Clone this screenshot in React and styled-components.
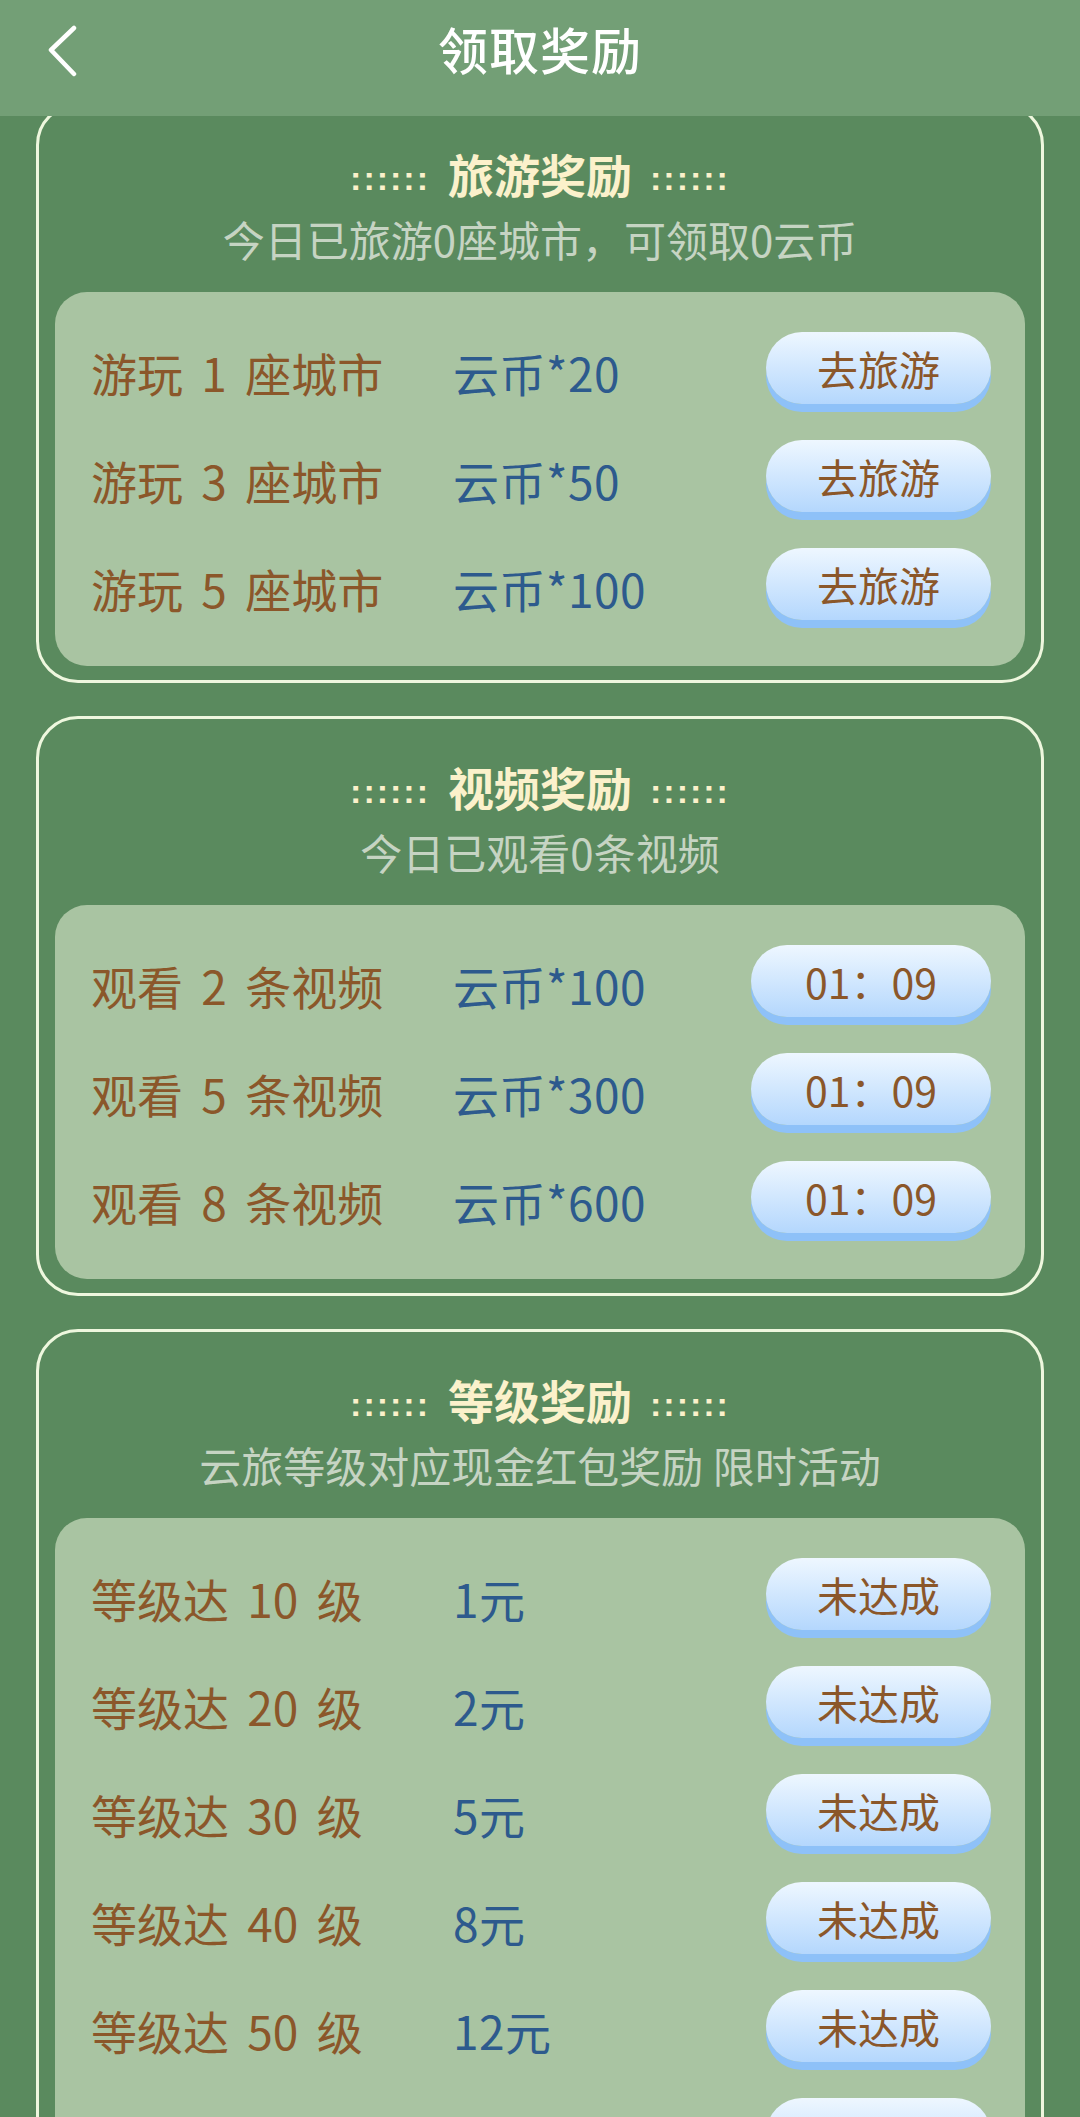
import React from 'react'
import styled, { createGlobalStyle } from 'styled-components'

const GlobalStyle = createGlobalStyle`
    html, body {
        margin: 0;
        padding: 0;
        background: #5a8a5e;
        font-family: "Noto Sans CJK SC", "Noto Sans", sans-serif;
    }
`

const travelRows = [
    { label: '游玩 1 座城市', reward: '云币*20', action: '去旅游' },
    { label: '游玩 3 座城市', reward: '云币*50', action: '去旅游' },
    { label: '游玩 5 座城市', reward: '云币*100', action: '去旅游' },
]

const videoRows = [
    { label: '观看 2 条视频', reward: '云币*100', action: '01：09' },
    { label: '观看 5 条视频', reward: '云币*300', action: '01：09' },
    { label: '观看 8 条视频', reward: '云币*600', action: '01：09' },
]

const levelRows = [
    { label: '等级达 10 级', reward: '1元', action: '未达成' },
    { label: '等级达 20 级', reward: '2元', action: '未达成' },
    { label: '等级达 30 级', reward: '5元', action: '未达成' },
    { label: '等级达 40 级', reward: '8元', action: '未达成' },
    { label: '等级达 50 级', reward: '12元', action: '未达成' },
    { label: '等级达 60 级', reward: '20元', action: '未达成' },
]

function RewardCard({ title, desc, rows, wide }) {
    return (
        <Card>
            <CardTitle>
                <Dots>::::::</Dots>
                <span>{title}</span>
                <Dots>::::::</Dots>
            </CardTitle>
            <CardDesc>{desc}</CardDesc>
            <Panel>
                {rows.map((r, i) => (
                    <Row key={i}>
                        <Label>{r.label}</Label>
                        <Reward>{r.reward}</Reward>
                        <ActionButton wide={wide}>{r.action}</ActionButton>
                    </Row>
                ))}
            </Panel>
        </Card>
    )
}

function App() {
    return (
        <>
            <GlobalStyle />
            <Header>
                <BackButton>
                    <svg width="34" height="52" viewBox="0 0 34 52" fill="none">
                        <path d="M28 3 L5 25 L28 49" stroke="#fff" strokeWidth="4.5" strokeLinecap="round" strokeLinejoin="round" />
                    </svg>
                </BackButton>
                <HeaderTitle>领取奖励</HeaderTitle>
            </Header>
            <Main>
                <RewardCard title="旅游奖励" desc="今日已旅游0座城市，可领取0云币" rows={travelRows} />
                <RewardCard title="视频奖励" desc="今日已观看0条视频" rows={videoRows} wide />
                <RewardCard title="等级奖励" desc="云旅等级对应现金红包奖励 限时活动" rows={levelRows} />
            </Main>
        </>
    )
}

export default App

const Header = styled.div`
    position: fixed;
    top: 0;
    left: 0;
    right: 0;
    height: 116px;
    background: #739f76;
    display: flex;
    align-items: center;
    justify-content: center;
    z-index: 10;
`

const BackButton = styled.div`
    position: absolute;
    left: 46px;
    top: 25px;
    display: flex;
`

const HeaderTitle = styled.div`
    color: #fff;
    font-size: 50px;
    font-weight: 500;
    line-height: 1;
    margin-top: -20px;
    letter-spacing: 1px;
`

const Main = styled.div`
    padding: 103px 36px 40px;
    display: flex;
    flex-direction: column;
    gap: 33px;
`

const Card = styled.div`
    border: 3px solid #eef7de;
    border-radius: 42px;
    padding: 37px 16px 14px;
    display: flex;
    flex-direction: column;
    align-items: center;
`

const CardTitle = styled.div`
    display: flex;
    align-items: center;
    gap: 18px;
    height: 60px;
    color: #fbf1cb;
    font-size: 46px;
    font-weight: 700;
`

const Dots = styled.span`
    font-size: 34px;
    font-weight: 700;
    letter-spacing: 2px;
    margin-top: 10px;
    font-family: "Liberation Sans", sans-serif;
`

const CardDesc = styled.div`
    margin-top: 8px;
    height: 56px;
    line-height: 56px;
    font-size: 42px;
    color: #c6d4c3;
`

const Panel = styled.div`
    align-self: stretch;
    margin-top: 25px;
    background: #a9c4a2;
    border-radius: 32px;
    padding: 26px 34px 24px 36px;
`

const Row = styled.div`
    height: 108px;
    display: grid;
    grid-template-columns: 362px 1fr auto;
    align-items: center;
`

const Label = styled.div`
    font-size: 46px;
    color: #8b572a;
    white-space: pre;
    word-spacing: 8px;
`

const Reward = styled.div`
    font-size: 46px;
    color: #2d5a8d;
    letter-spacing: 0.5px;
`

const ActionButton = styled.div`
    width: ${props => props.wide ? '240px' : '225px'};
    height: 72px;
    margin-top: -8px;
    border-radius: 36px;
    background: linear-gradient(180deg, #eef7ff 0%, #b4d7fd 100%);
    box-shadow: 0 8px 0 #8ec1f8;
    display: flex;
    align-items: center;
    justify-content: center;
    font-size: 41px;
    color: #8b572a;
`
